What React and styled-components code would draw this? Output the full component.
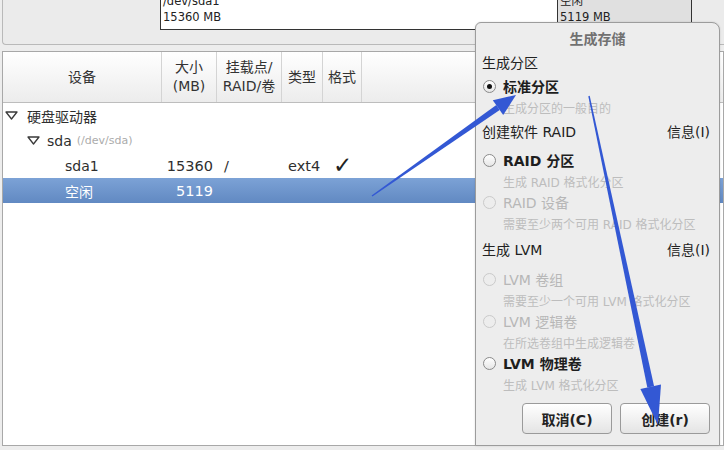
import styled, { createGlobalStyle } from 'styled-components';

const GlobalStyle = createGlobalStyle`
  html, body {
    margin: 0;
    padding: 0;
    background: #ededed;
  }
  body {
    font-family: "DejaVu Sans", "Noto Sans CJK SC", sans-serif;
    color: #2e2e2e;
  }
`;

const COLS = '159px 55px 65px 41px 39px 1fr';

function Toggle() {
  return (
    <svg width="13" height="9" viewBox="0 0 13 9">
      <polygon points="1,1 12,1 6.5,8" fill="#fff" stroke="#3a3a3a" strokeWidth="1.3" strokeLinejoin="round" />
    </svg>
  );
}

function Arrows() {
  return (
    <Overlay width="724" height="450" viewBox="0 0 724 450">
      <g fill="#3358d4">
        <polygon points="372.4,196.6 371.6,195.4 496.3,105.1 499.7,110.1" />
        <polygon points="503.2,115 492.8,100.2 516,95" />
        <polygon points="588.3,96.2 589.7,95.8 654.1,386.2 647.3,387.6" />
        <polygon points="640.4,389 661,384.6 658,425" />
      </g>
    </Overlay>
  );
}

function Option({ label, sub, checked, disabled }) {
  return (
    <OptionGroup>
      <OptionRow $disabled={disabled}>
        <Radio $disabled={disabled}>{checked && <Dot />}</Radio>
        {label}
      </OptionRow>
      <Sub>{sub}</Sub>
    </OptionGroup>
  );
}

function App() {
  return (
    <Screen>
      <GlobalStyle />
      <Strip>
        <StripGap />
        <DeviceBox>
          <span>/dev/sda1</span>
          <span>15360 MB</span>
        </DeviceBox>
        <FreeBox>
          <span>空闲</span>
          <span>5119 MB</span>
        </FreeBox>
      </Strip>

      <Table>
        <HeaderRow>
          <HeadCell>设备</HeadCell>
          <HeadCell>大小<br />(MB)</HeadCell>
          <HeadCell>挂载点/<br />RAID/卷</HeadCell>
          <HeadCell>类型</HeadCell>
          <HeadCell>格式</HeadCell>
          <HeadCell $last />
        </HeaderRow>
        <Row>
          <TreeCell $indent={2} $gap={9}>
            <Toggle />
            硬盘驱动器
          </TreeCell>
        </Row>
        <Row>
          <TreeCell $indent={24} $gap={7}>
            <Toggle />
            sda <Path>(/dev/sda)</Path>
          </TreeCell>
        </Row>
        <Row>
          <TreeCell $indent={62}>sda1</TreeCell>
          <SizeCell>15360</SizeCell>
          <Cell $pad={7}>/</Cell>
          <Cell $pad={6}>ext4</Cell>
          <Cell $pad={10}>
            <Check>✓</Check>
          </Cell>
        </Row>
        <Row $selected>
          <TreeCell $indent={62}>空闲</TreeCell>
          <SizeCell>5119</SizeCell>
        </Row>
      </Table>

      <Dialog>
        <Title>生成存储</Title>
        <Section $top={0}>
          <span>生成分区</span>
        </Section>
        <Options $top={3}>
          <Option checked label="标准分区" sub="生成分区的一般目的" />
        </Options>
        <Section $top={4}>
          <span>创建软件 RAID</span>
          <Info>信息(I)</Info>
        </Section>
        <Options $top={8}>
          <Option label="RAID 分区" sub="生成 RAID 格式化分区" />
          <Option disabled label="RAID 设备" sub="需要至少两个可用 RAID 格式化分区" />
        </Options>
        <Section $top={6}>
          <span>生成 LVM</span>
          <Info>信息(I)</Info>
        </Section>
        <Options $top={9}>
          <Option disabled label="LVM 卷组" sub="需要至少一个可用 LVM 格式化分区" />
          <Option disabled label="LVM 逻辑卷" sub="在所选卷组中生成逻辑卷" />
          <Option label="LVM 物理卷" sub="生成 LVM 格式化分区" />
        </Options>
        <Buttons>
          <Button>取消(C)</Button>
          <Button>创建(r)</Button>
        </Buttons>
      </Dialog>

      <Arrows />
    </Screen>
  );
}

const Screen = styled.div`
  position: relative;
  width: 724px;
  height: 450px;
  overflow: hidden;
  display: flex;
  flex-direction: column;
  background: #ededed;
`;

const Strip = styled.div`
  height: 44px;
  margin-left: 2px;
  display: flex;
  align-items: flex-start;
  border-left: 1px solid #b9b9b9;
  border-bottom: 1px solid #b9b9b9;
  border-bottom-left-radius: 4px;
  overflow: hidden;
  background: #ebebeb;
`;

const StripGap = styled.div`
  width: 157px;
`;

const DeviceBox = styled.div`
  width: 397px;
  height: 30px;
  display: flex;
  flex-direction: column;
  justify-content: flex-end;
  padding: 0 0 4px 2px;
  box-sizing: border-box;
  background: #fff;
  border-left: 1px solid #333;
  border-bottom: 1px solid #333;
  font-size: 11.5px;
  line-height: 16px;
  color: #222;
`;

const FreeBox = styled(DeviceBox)`
  width: 135px;
  background: #e0e0e0;
  border-right: 1px solid #333;
`;

const Table = styled.div`
  flex: 1;
  margin: 6px 0 4px 2px;
  background: #fff;
  border: 1px solid #a8a8a8;
`;

const HeaderRow = styled.div`
  display: grid;
  grid-template-columns: ${COLS};
  height: 50px;
  background: linear-gradient(#ffffff, #ececec);
  border-bottom: 1px solid #bdbdbd;
`;

const HeadCell = styled.div`
  display: flex;
  align-items: center;
  justify-content: center;
  text-align: center;
  font-size: 14px;
  line-height: 19px;
  color: #333;
  border-right: ${(p) => (p.$last ? 'none' : '1px solid #d4d4d4')};
`;

const Row = styled.div`
  display: grid;
  grid-template-columns: ${COLS};
  height: 25px;
  align-items: center;
  font-size: 14.5px;
  color: ${(p) => (p.$selected ? '#fff' : '#2e2e2e')};
  background: ${(p) => (p.$selected ? 'linear-gradient(#7ca2d6, #6189c2)' : 'transparent')};
`;

const TreeCell = styled.div`
  display: flex;
  align-items: center;
  gap: ${(p) => p.$gap || 0}px;
  padding-left: ${(p) => p.$indent}px;
  white-space: nowrap;
  font-size: 14px;
`;

const Path = styled.span`
  font-size: 11px;
  color: #ababab;
  margin-left: -2px;
`;

const SizeCell = styled.div`
  text-align: right;
  padding-right: 4px;
`;

const Cell = styled.div`
  padding-left: ${(p) => p.$pad}px;
  white-space: nowrap;
`;

const Check = styled.span`
  font-size: 23px;
  line-height: 20px;
  color: #222;
`;

const Dialog = styled.div`
  position: absolute;
  left: 475px;
  top: 22px;
  width: 245px;
  height: 424px;
  box-sizing: border-box;
  display: flex;
  flex-direction: column;
  background: #ededed;
  border: 1px solid #9c9c9c;
  border-radius: 6px 8px 0 0;
  box-shadow: 0 0 2px rgba(0, 0, 0, 0.15);
`;

const Title = styled.div`
  height: 29px;
  display: flex;
  align-items: center;
  justify-content: center;
  font-size: 14px;
  font-weight: bold;
  color: #717171;
`;

const Section = styled.div`
  display: flex;
  justify-content: space-between;
  align-items: center;
  height: 20px;
  margin-top: ${(p) => p.$top}px;
  padding: 0 9px 0 6px;
  font-size: 14px;
  color: #222;
`;

const Info = styled.span`
  color: #222;
`;

const Options = styled.div`
  display: flex;
  flex-direction: column;
  margin-top: ${(p) => p.$top}px;
`;

const OptionGroup = styled.div`
  display: flex;
  flex-direction: column;
`;

const OptionRow = styled.div`
  display: flex;
  align-items: center;
  gap: 7px;
  height: 22px;
  padding-left: 7px;
  font-size: 14px;
  font-weight: ${(p) => (p.$disabled ? 'normal' : 'bold')};
  color: ${(p) => (p.$disabled ? '#b7b7b7' : '#1e1e1e')};
`;

const Radio = styled.span`
  width: 13px;
  height: 13px;
  box-sizing: border-box;
  border-radius: 50%;
  display: flex;
  align-items: center;
  justify-content: center;
  border: 1px solid ${(p) => (p.$disabled ? '#cacaca' : '#8a8a8a')};
  background: ${(p) => (p.$disabled ? '#ededed' : 'linear-gradient(#fff, #e6e6e6)')};
`;

const Dot = styled.span`
  width: 5px;
  height: 5px;
  border-radius: 50%;
  background: #111;
`;

const Sub = styled.div`
  height: 20px;
  display: flex;
  align-items: center;
  padding-left: 27px;
  font-size: 12px;
  color: #bdbdbd;
  white-space: nowrap;
`;

const Buttons = styled.div`
  display: flex;
  justify-content: flex-end;
  gap: 8px;
  margin-top: 9px;
  padding-right: 9px;
`;

const Button = styled.button`
  width: 90px;
  height: 31px;
  font-family: inherit;
  font-size: 14px;
  font-weight: bold;
  color: #222;
  border: 1px solid #9a9a9a;
  border-radius: 4px;
  background: linear-gradient(#ffffff, #e4e4e4);
`;

const Overlay = styled.svg`
  position: absolute;
  left: 0;
  top: 0;
  pointer-events: none;
`;

export default App;
